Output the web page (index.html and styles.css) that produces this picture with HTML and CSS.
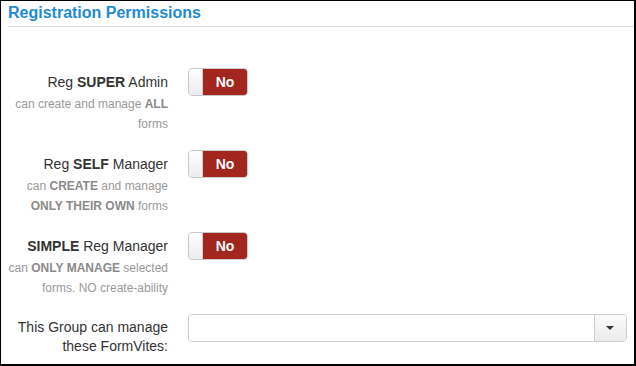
FILE: index.html
```html
<!DOCTYPE html>
<html>
<head>
<meta charset="utf-8">
<link rel="stylesheet" href="styles.css">
</head>
<body>
<div class="frame">
  <h2 class="title">Registration Permissions</h2>
  <div class="rows">
    <div class="row">
      <div class="label">
        <div class="main">Reg <b>SUPER</b> Admin</div>
        <div class="sub">can create and manage <b>ALL</b> forms</div>
      </div>
      <div class="toggle"><span class="handle"></span><span class="state">No</span></div>
    </div>
    <div class="row">
      <div class="label">
        <div class="main">Reg <b>SELF</b> Manager</div>
        <div class="sub">can <b>CREATE</b> and manage <b>ONLY THEIR OWN</b> forms</div>
      </div>
      <div class="toggle"><span class="handle"></span><span class="state">No</span></div>
    </div>
    <div class="row">
      <div class="label">
        <div class="main"><b>SIMPLE</b> Reg Manager</div>
        <div class="sub">can <b>ONLY MANAGE</b> selected forms. NO create-ability</div>
      </div>
      <div class="toggle"><span class="handle"></span><span class="state">No</span></div>
    </div>
    <div class="row">
      <div class="label plain">This Group can manage these FormVites:</div>
      <div class="select">
        <div class="select-field"></div>
        <div class="select-btn"><span class="caret"></span></div>
      </div>
    </div>
  </div>
</div>
</body>
</html>
```
FILE: styles.css
```css
html, body {
  margin: 0;
  padding: 0;
  background: #fff;
}
body {
  font-family: "Liberation Sans", Arial, sans-serif;
  color: #333;
}
.frame {
  box-sizing: border-box;
  width: 636px;
  height: 366px;
  border: 1px solid #000;
  border-right-width: 2px;
  border-bottom-width: 2px;
  padding: 2px 0 0 7px;
  overflow: hidden;
}
.title {
  margin: 0;
  font-size: 16px;
  line-height: 20px;
  font-weight: bold;
  color: #1e8bd2;
  padding-bottom: 3px;
  border-bottom: 1px solid #dcdcdc;
}
.rows {
  display: flex;
  flex-direction: column;
  gap: 16px;
  padding: 41px 7px 0 0;
}
.row {
  display: flex;
  align-items: flex-start;
  gap: 20px;
}
.label {
  width: 160px;
  flex: none;
  text-align: right;
}
.main {
  font-size: 14px;
  line-height: 24px;
  margin-top: 2px;
}
.sub {
  font-size: 12px;
  line-height: 20px;
  color: #999;
}
.sub b {
  color: #8a8a8a;
}
.label.plain {
  font-size: 14px;
  line-height: 19px;
  padding-top: 4px;
}
.toggle {
  display: flex;
  width: 60px;
  height: 28px;
  box-sizing: border-box;
  border: 1px solid #c8c8c8;
  border-radius: 4px;
  overflow: hidden;
}
.handle {
  width: 13px;
  background: linear-gradient(#ffffff, #ececec);
  border-right: 1px solid #d0d0d0;
}
.state {
  flex: 1;
  background: #a2251e;
  color: #fff;
  font-weight: bold;
  font-size: 14px;
  line-height: 26px;
  text-align: center;
}
.select {
  flex: 1;
  display: flex;
  height: 28px;
  box-sizing: border-box;
  border: 1px solid #cccccc;
  border-radius: 4px;
  overflow: hidden;
}
.select-field {
  flex: 1;
  background: #fff;
}
.select-btn {
  width: 31px;
  border-left: 1px solid #cccccc;
  background: linear-gradient(#fafafa, #ebebeb);
  display: flex;
  align-items: center;
  justify-content: center;
}
.caret {
  width: 0;
  height: 0;
  border-left: 4px solid transparent;
  border-right: 4px solid transparent;
  border-top: 4px solid #333;
  margin-right: 1px;
}
```
